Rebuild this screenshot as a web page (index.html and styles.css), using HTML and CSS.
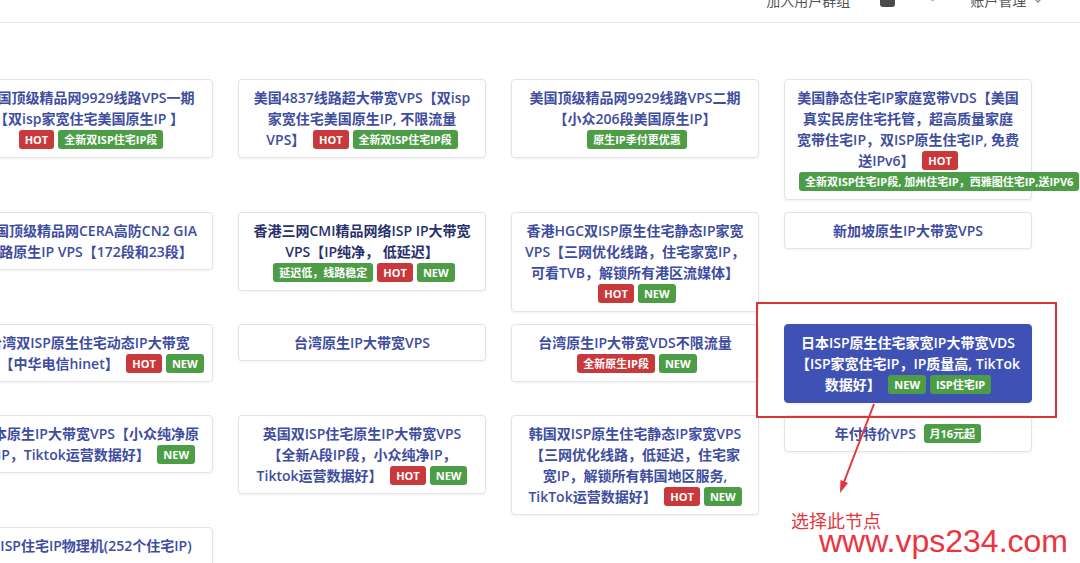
FILE: index.html
```html
<!DOCTYPE html>
<html lang="zh-CN">

<head>
  <meta charset="UTF-8">
  <meta name="viewport" content="width=device-width, initial-scale=1.0">
  <title>产品列表</title>
  <link rel="stylesheet" href="styles.css">
</head>

<body>
  <header class="topbar">
    <nav class="topbar__nav">
      <a class="topbar__link" href="#">加入用户群组</a>
      <span class="topbar__icon topbar__icon--msg"></span>
      <span class="topbar__icon topbar__icon--bell">
        <svg width="15" height="14" viewBox="0 0 15 14"><path d="M3 1 L12 1 L12 4 L3 4 Z M6 5 L9 5 L9 7 L6 7 Z" fill="#bbb"/></svg>
      </span>
      <a class="topbar__link" href="#">账户管理
        <svg class="topbar__caret" width="8" height="6" viewBox="0 0 8 6"><path d="M1 1 L4 4 L7 1" fill="none" stroke="#888" stroke-width="1.3"/></svg>
      </a>
    </nav>
  </header>

  <main class="products">
    <!-- row 1 -->
    <div class="product">美国顶级精品网9929线路VPS一期<br>【双isp家宽住宅美国原生IP 】<br><span class="tag tag--red">HOT</span><span class="tag tag--green">全新双ISP住宅IP段</span></div>
    <div class="product">美国4837线路超大带宽VPS【双isp<br>家宽住宅美国原生IP, 不限流量<br>VPS】 <span class="tag tag--red">HOT</span><span class="tag tag--green">全新双ISP住宅IP段</span></div>
    <div class="product">美国顶级精品网9929线路VPS二期<br>【小众206段美国原生IP】<br><span class="tag tag--green">原生IP季付更优惠</span></div>
    <div class="product">美国静态住宅IP家庭宽带VDS【美国<br>真实民房住宅托管，超高质量家庭<br>宽带住宅IP，双ISP原生住宅IP, 免费<br>送IPv6】 <span class="tag tag--red">HOT</span><br><span class="tag tag--green tag--wide">全新双ISP住宅IP段, 加州住宅IP，西雅图住宅IP,送IPV6</span></div>

    <!-- row 2 -->
    <div class="product">美国顶级精品网CERA高防CN2 GIA<br>线路原生IP VPS【172段和23段】</div>
    <div class="product product--dark">香港三网CMI精品网络ISP IP大带宽<br>VPS【IP纯净， 低延迟】<br><span class="tag tag--green">延迟低，线路稳定</span><span class="tag tag--red">HOT</span><span class="tag tag--green">NEW</span></div>
    <div class="product">香港HGC双ISP原生住宅静态IP家宽<br>VPS【三网优化线路，住宅家宽IP，<br>可看TVB，解锁所有港区流媒体】<br><span class="tag tag--red">HOT</span><span class="tag tag--green">NEW</span></div>
    <div class="product">新加坡原生IP大带宽VPS</div>

    <!-- row 3 -->
    <div class="product">台湾双ISP原生住宅动态IP大带宽<br>VPS【中华电信hinet】 <span class="tag tag--red">HOT</span><span class="tag tag--green">NEW</span></div>
    <div class="product">台湾原生IP大带宽VPS</div>
    <div class="product">台湾原生IP大带宽VDS不限流量<br><span class="tag tag--red">全新原生IP段</span><span class="tag tag--green">NEW</span></div>
    <div class="product product--active">日本ISP原生住宅家宽IP大带宽VDS<br>【ISP家宽住宅IP，IP质量高, TikTok<br>数据好】 <span class="tag tag--green">NEW</span><span class="tag tag--green">ISP住宅IP</span></div>

    <!-- row 4 -->
    <div class="product">日本原生IP大带宽VPS【小众纯净原<br>生IP，Tiktok运营数据好】 <span class="tag tag--green">NEW</span></div>
    <div class="product">英国双ISP住宅原生IP大带宽VPS<br>【全新A段IP段，小众纯净IP，<br>Tiktok运营数据好】 <span class="tag tag--red">HOT</span><span class="tag tag--green">NEW</span></div>
    <div class="product">韩国双ISP原生住宅静态IP家宽VPS<br>【三网优化线路，低延迟，住宅家<br>宽IP，解锁所有韩国地区服务,<br>TikTok运营数据好】 <span class="tag tag--red">HOT</span><span class="tag tag--green">NEW</span></div>
    <div class="product">年付特价VPS <span class="tag tag--green">月16元起</span></div>

    <!-- row 5 -->
    <div class="product">双ISP住宅IP物理机(252个住宅IP)<br>&nbsp;</div>
  </main>

  <!-- screenshot annotation -->
  <div class="callout-box"></div>
  <svg class="callout-arrow" width="1080" height="563" viewBox="0 0 1080 563">
    <line x1="874" y1="404" x2="844" y2="482" stroke="#e0363c" stroke-width="2"/>
    <polygon points="840,493 848,483 840.5,480" fill="#e0363c"/>
  </svg>
  <div class="callout-note">选择此节点</div>
  <div class="callout-site">www.vps234.com</div>
</body>

</html>
```

FILE: styles.css
```css
html {
  box-sizing: border-box;
}

*,
*::before,
*::after {
  box-sizing: inherit;
}

body {
  margin: 0;
  background: #fff;
  overflow: hidden;
  font-family: "Open Sans", "Noto Sans CJK SC", sans-serif;
}

a {
  text-decoration: none;
  color: inherit;
}

/* top bar, scrolled slightly out of view */

.topbar {
  height: 23px;
  border-bottom: 1px solid #e6e6e6;
  overflow: hidden;
  background: #fff;
}

.topbar__nav {
  display: flex;
  justify-content: flex-end;
  align-items: center;
  gap: 30px;
  height: 20px;
  margin-top: -10px;
  padding-right: 38px;
  font-size: 14px;
  color: #555;
}

.topbar__icon {
  display: block;
  width: 15px;
  height: 14px;
}

.topbar__icon--msg {
  background: #4a4a4a;
  border-radius: 3px;
}

.topbar__caret {
  margin-left: 4px;
  vertical-align: 2px;
}

/* product grid */

.products {
  display: grid;
  grid-template-columns: repeat(4, 248px);
  column-gap: 25px;
  row-gap: 12px;
  align-items: start;
  margin-left: -35px;
  padding-top: 56px;
}

.product {
  background: #fff;
  border: 1px solid #e3e3e3;
  border-radius: 4px;
  box-shadow: 0 1px 3px rgba(0, 0, 0, 0.06);
  padding: 7px 4px;
  text-align: center;
  font-size: 14px;
  line-height: 21px;
  font-weight: 600;
  color: #3e4d9f;
}

.product--dark {
  color: #27306c;
}

.product--active {
  background: #3f51b5;
  border-color: #3f51b5;
  color: #fff;
}

.tag {
  display: inline-block;
  vertical-align: 1px;
  margin-left: 4px;
  padding: 2px 6px;
  border-radius: 3px;
  font-size: 11px;
  line-height: 15px;
  font-weight: 700;
  color: #fff;
  white-space: nowrap;
}

.tag--wide {
  margin-left: 10px;
}

.tag--red {
  background: #c9393b;
}

.tag--green {
  background: #4d9d47;
}

/* annotation drawn over the screenshot */

.callout-box {
  position: absolute;
  left: 756px;
  top: 302px;
  width: 301px;
  height: 116px;
  border: 2px solid #d8353b;
}

.callout-arrow {
  position: absolute;
  left: 0;
  top: 0;
  pointer-events: none;
}

.callout-note {
  position: absolute;
  left: 791px;
  top: 509px;
  font-family: "Noto Sans CJK SC", sans-serif;
  font-size: 18px;
  line-height: 22px;
  color: #e4383e;
}

.callout-site {
  position: absolute;
  left: 819px;
  top: 523px;
  font-family: "Liberation Sans", Arial, sans-serif;
  font-size: 32px;
  line-height: 36px;
  color: #ec3440;
}
```
